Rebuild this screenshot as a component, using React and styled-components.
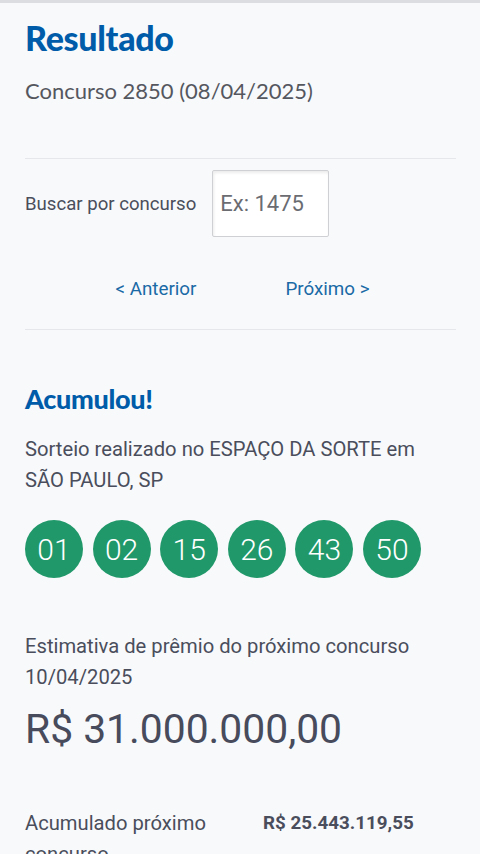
import React from "react";
import styled, { createGlobalStyle } from "styled-components";

const GlobalStyle = createGlobalStyle`
  html, body {
    margin: 0;
    padding: 0;
    background: #f8f9fb;
  }
  body {
    font-family: Roboto, "Liberation Sans", sans-serif;
    color: #4a4e5c;
    overflow: hidden;
  }
`;

const Page = styled.div`
  width: 480px;
  height: 854px;
  overflow: hidden;
  border-top: 3px solid #dcdde0;
  box-sizing: border-box;
  padding: 0 24px 0 25px;
  background: #f8f9fb;
`;

const Title = styled.h1`
  margin: 16px 0 0;
  font-family: Lato, "Open Sans", sans-serif;
  font-weight: 900;
  font-size: 34px;
  line-height: 38px;
  letter-spacing: -0.3px;
  color: #005ca9;
`;

const SubTitle = styled.p`
  margin: 21px 0 0;
  font-family: Lato, "Open Sans", sans-serif;
  font-size: 22px;
  line-height: 26px;
  color: #55575f;
`;

const Divider = styled.hr`
  margin: 0;
  border: none;
  border-top: 1px solid #e6e7ea;
  margin-top: ${p => p.$top}px;
`;

const SearchRow = styled.div`
  display: flex;
  align-items: center;
  gap: 16px;
  margin-top: 11px;
`;

const Label = styled.span`
  font-size: 18.6px;
  color: #4a4e5c;
`;

const SearchInput = styled.input`
  width: 117px;
  height: 67px;
  box-sizing: border-box;
  border: 1px solid #cfd0d3;
  border-radius: 2px;
  box-shadow: inset 1px 2px 3px rgba(0, 0, 0, 0.08);
  background: #fff;
  padding: 0 7px;
  font-family: Roboto, sans-serif;
  font-size: 22px;
  color: #4a4e5c;
  &::placeholder {
    color: #6a6c72;
  }
`;

const Nav = styled.div`
  display: flex;
  justify-content: center;
  gap: 89px;
  margin-top: 39px;
  padding-left: 4px;
`;

const NavLink = styled.a`
  font-size: 18.8px;
  color: #1a6aa6;
  text-decoration: none;
  line-height: 26px;
`;

const SectionTitle = styled.h2`
  margin: 54px 0 0;
  font-family: Lato, "Open Sans", sans-serif;
  font-weight: 900;
  font-size: 27px;
  line-height: 30px;
  letter-spacing: -0.3px;
  color: #005ca9;
`;

const Text = styled.p`
  margin: ${p => p.$top || 0}px 0 0;
  max-width: 410px;
  font-size: 20.2px;
  line-height: 31px;
  color: #4a4e5c;
`;

const Balls = styled.div`
  display: flex;
  gap: 9.6px;
  margin-top: 24px;
`;

const Ball = styled.div`
  width: 58px;
  height: 58px;
  border-radius: 50%;
  background: #209869;
  color: #fff;
  display: flex;
  align-items: center;
  justify-content: center;
  font-size: 30px;
  font-weight: 300;
`;

const Prize = styled.div`
  margin-top: 12px;
  font-size: 40.8px;
  line-height: 48px;
  color: #474b5c;
`;

const Row = styled.div`
  display: grid;
  grid-template-columns: 238px 1fr;
  margin-top: 55px;
`;

const Value = styled.span`
  font-size: 18.8px;
  font-weight: 700;
  line-height: 31px;
  color: #4a4e5c;
`;

const numbers = ["01", "02", "15", "26", "43", "50"];

export default function App() {
  return (
    <>
      <GlobalStyle />
      <Page>
        <Title>Resultado</Title>
        <SubTitle>Concurso 2850 (08/04/2025)</SubTitle>
        <Divider $top={54} />
        <SearchRow>
          <Label>Buscar por concurso</Label>
          <SearchInput placeholder="Ex: 1475" />
        </SearchRow>
        <Nav>
          <NavLink href="#">&lt; Anterior</NavLink>
          <NavLink href="#">Próximo &gt;</NavLink>
        </Nav>
        <Divider $top={27} />
        <SectionTitle>Acumulou!</SectionTitle>
        <Text $top={20}>
          Sorteio realizado no ESPAÇO DA SORTE em SÃO PAULO, SP
        </Text>
        <Balls>
          {numbers.map(n => (
            <Ball key={n}>{n}</Ball>
          ))}
        </Balls>
        <Text $top={53}>
          Estimativa de prêmio do próximo concurso 10/04/2025
        </Text>
        <Prize>R$ 31.000.000,00</Prize>
        <Row>
          <Text>Acumulado próximo concurso</Text>
          <Value>R$ 25.443.119,55</Value>
        </Row>
      </Page>
    </>
  );
}
